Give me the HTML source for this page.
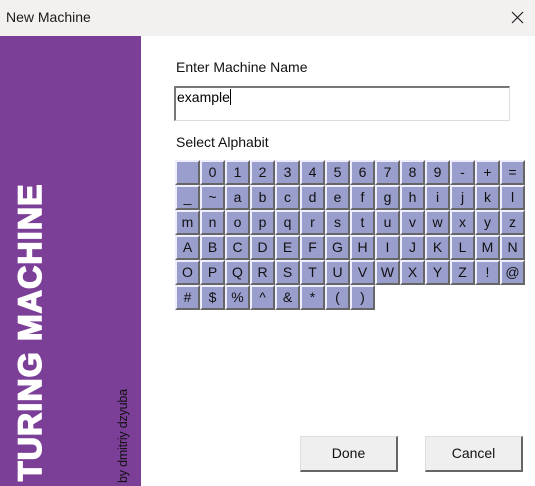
<!DOCTYPE html>
<html><head><meta charset="utf-8"><style>
*{margin:0;padding:0;box-sizing:border-box}
body{width:535px;height:486px;overflow:hidden;background:#fff;font-family:"Liberation Sans",Arial,sans-serif;position:relative}
.tb{position:absolute;left:0;top:0;width:535px;height:36px;background:#f3f1f0}
.tb span{position:absolute;left:6px;top:9px;font-size:14px;color:#1a1a1a}
.side{position:absolute;left:0;top:36px;width:141px;height:450px;background:#7b3f98}
.t{position:absolute;left:14px;top:481px;transform-origin:0 0;transform:rotate(-90deg);white-space:nowrap;font-family:"Liberation Sans",sans-serif;font-weight:700;font-size:32px;color:#fff;line-height:32px;-webkit-text-stroke:1.6px #fff;letter-spacing:1.2px}
.by{position:absolute;left:117px;top:483px;transform-origin:0 0;transform:rotate(-90deg);white-space:nowrap;font-size:12.5px;color:#111;line-height:13px;letter-spacing:-0.2px}
.lbl{position:absolute;left:176px;font-size:14px;color:#111}
.inp{position:absolute;left:174px;top:86px;width:336px;height:35px;border:1px solid #ddd;border-top:2px solid #777;border-left:2px solid #777;font-size:14px;padding:1px 1px}
.cur{display:inline-block;width:1px;height:16px;background:#000;vertical-align:-3px}
.g{position:absolute;left:175px;top:160px;width:350px}
.c{position:absolute;width:25px;height:25px;background:#9a9ecc;border-top:2px solid #eef;border-left:2px solid #eef;border-right:2px solid #666;border-bottom:2px solid #666;font-size:14px;text-align:center;line-height:21px;color:#111}
.btn{position:absolute;top:436px;width:98px;height:36px;background:#efefef;border:1px solid #ddd;border-right:2px solid #666;border-bottom:2px solid #666;font-size:14px;text-align:center;line-height:33px;color:#111}
</style></head><body>
<div class="tb"><span>New Machine</span>
<svg style="position:absolute;left:511px;top:11px" width="13" height="13"><path d="M1 1L12 12M12 1L1 12" stroke="#222" stroke-width="1.2"/></svg></div>
<div class="side"></div>
<div class="t">TURING MACHINE</div>
<div class="by">by dmitriy dzyuba</div>
<div class="lbl" style="top:59px">Enter Machine Name</div>
<div class="inp">example<span class="cur"></span></div>
<div class="lbl" style="top:134px">Select Alphabit</div>
<div class="g" id="g">
</div>
<div class="btn" style="left:300px">Done</div>
<div class="btn" style="left:425px">Cancel</div>
<script>
var rows=[["","0","1","2","3","4","5","6","7","8","9","-","+","="],["_","~","a","b","c","d","e","f","g","h","i","j","k","l"],"mnopqrstuvwxyz".split(""),"ABCDEFGHIJKLMN".split(""),["O","P","Q","R","S","T","U","V","W","X","Y","Z","!","@"],["#","$","%","^","&","*","(",")"]];
var h="";rows.forEach(function(r,i){r.forEach(function(ch,j){h+='<div class="c" style="left:'+(j*25)+'px;top:'+(i*25)+'px">'+ch.replace("&","&amp;")+'</div>';});});
document.getElementById("g").innerHTML=h;
</script>
</body></html>
